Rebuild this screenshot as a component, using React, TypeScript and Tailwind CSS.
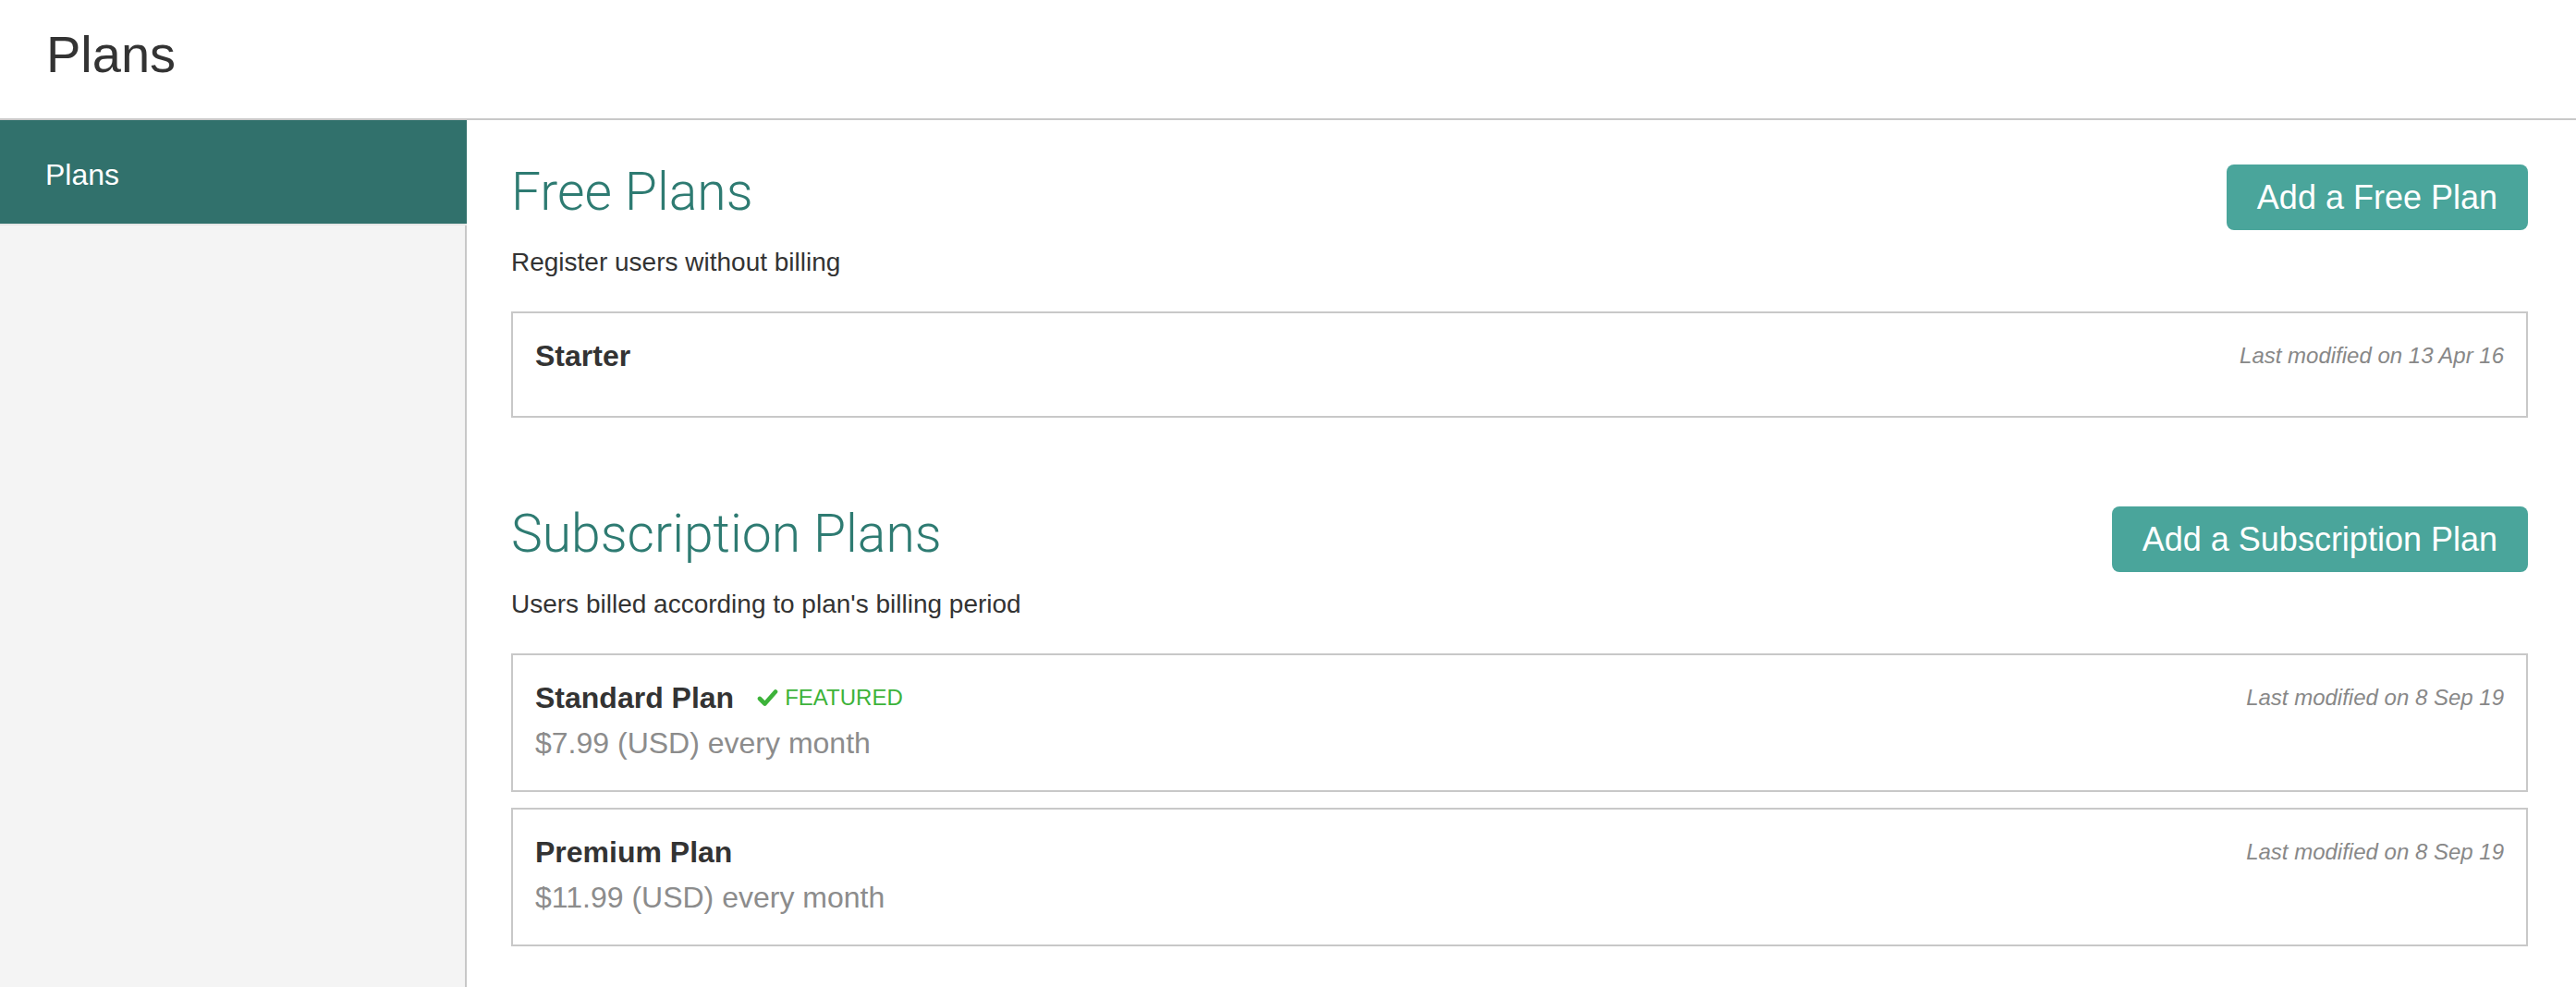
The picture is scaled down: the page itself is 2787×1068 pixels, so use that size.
import React from 'react';

interface PlanCardProps {
  name: string;
  modified: string;
  price?: string;
  featured?: boolean;
}

const CheckMark = () => (
  <svg width="23" height="20" viewBox="0 0 23 20" className="shrink-0">
    <polyline
      points="3,11 8.5,16.5 20,3.5"
      fill="none"
      stroke="#3db33a"
      strokeWidth="4.6"
      strokeLinecap="round"
      strokeLinejoin="round"
    />
  </svg>
);

const PlanCard = ({ name, modified, price, featured }: PlanCardProps) => (
  <div
    className={`border-2 border-[#c8c8c8] bg-white px-[24px] pt-[24px] ${price ? 'pb-[24px]' : 'pb-[43px]'}`}
  >
    <div className="flex items-center justify-between">
      <div className="flex items-center">
        <span className="text-[32px] leading-[44px] font-bold text-[#333]">{name}</span>
        {featured && (
          <span className="ml-[25px] flex items-center gap-[7px] text-[24px] leading-none text-[#3db33a]">
            <CheckMark />
            FEATURED
          </span>
        )}
      </div>
      <span className="text-[24px] italic text-[#888]">{modified}</span>
    </div>
    {price && <div className="text-[32px] leading-[54px] text-[#8c8c8c]">{price}</div>}
  </div>
);

interface SectionProps {
  title: string;
  description: string;
  action: string;
  children: React.ReactNode;
}

const Section = ({ title, description, action, children }: SectionProps) => (
  <section>
    <div className="flex items-start justify-between">
      <div>
        <h2 className="font-['Roboto','Liberation_Sans',sans-serif] font-light text-[57px] leading-[60px] text-[#2e7b72]">
          {title}
        </h2>
        <p className="mt-[28px] text-[28px] leading-[36px] text-[#333]">{description}</p>
      </div>
      <button className="h-[71px] px-[33px] rounded-[8px] bg-[#4aa59b] text-white text-[36px] leading-none">
        {action}
      </button>
    </div>
    <div className="mt-[35px] flex flex-col gap-[17px]">{children}</div>
  </section>
);

export default function App() {
  return (
    <div className="min-h-screen bg-white font-['Liberation_Sans',Arial,sans-serif] text-[#333]">
      <header className="h-[130px] flex items-center px-[50px] pb-[10px] border-b-2 border-[#c8c8c8]">
        <h1 className="text-[56px] leading-none">Plans</h1>
      </header>

      <div className="flex min-h-[938px]">
        <aside className="w-[505px] shrink-0 bg-[#f4f4f4] border-r-2 border-[#c8c8c8]">
          <div className="h-[114px] -mr-[2px] flex items-center px-[49px] pt-[6px] bg-[#31716c] text-white text-[32px] border-b-2 border-[#e6e6e6]">
            Plans
          </div>
        </aside>

        <main className="flex-1 flex flex-col gap-[96px] pl-[48px] pr-[52px] pt-[48px] pb-[40px]">
          <Section
            title="Free Plans"
            description="Register users without billing"
            action="Add a Free Plan"
          >
            <PlanCard name="Starter" modified="Last modified on 13 Apr 16" />
          </Section>

          <Section
            title="Subscription Plans"
            description="Users billed according to plan's billing period"
            action="Add a Subscription Plan"
          >
            <PlanCard
              name="Standard Plan"
              featured
              price="$7.99 (USD) every month"
              modified="Last modified on 8 Sep 19"
            />
            <PlanCard
              name="Premium Plan"
              price="$11.99 (USD) every month"
              modified="Last modified on 8 Sep 19"
            />
          </Section>
        </main>
      </div>
    </div>
  );
}
